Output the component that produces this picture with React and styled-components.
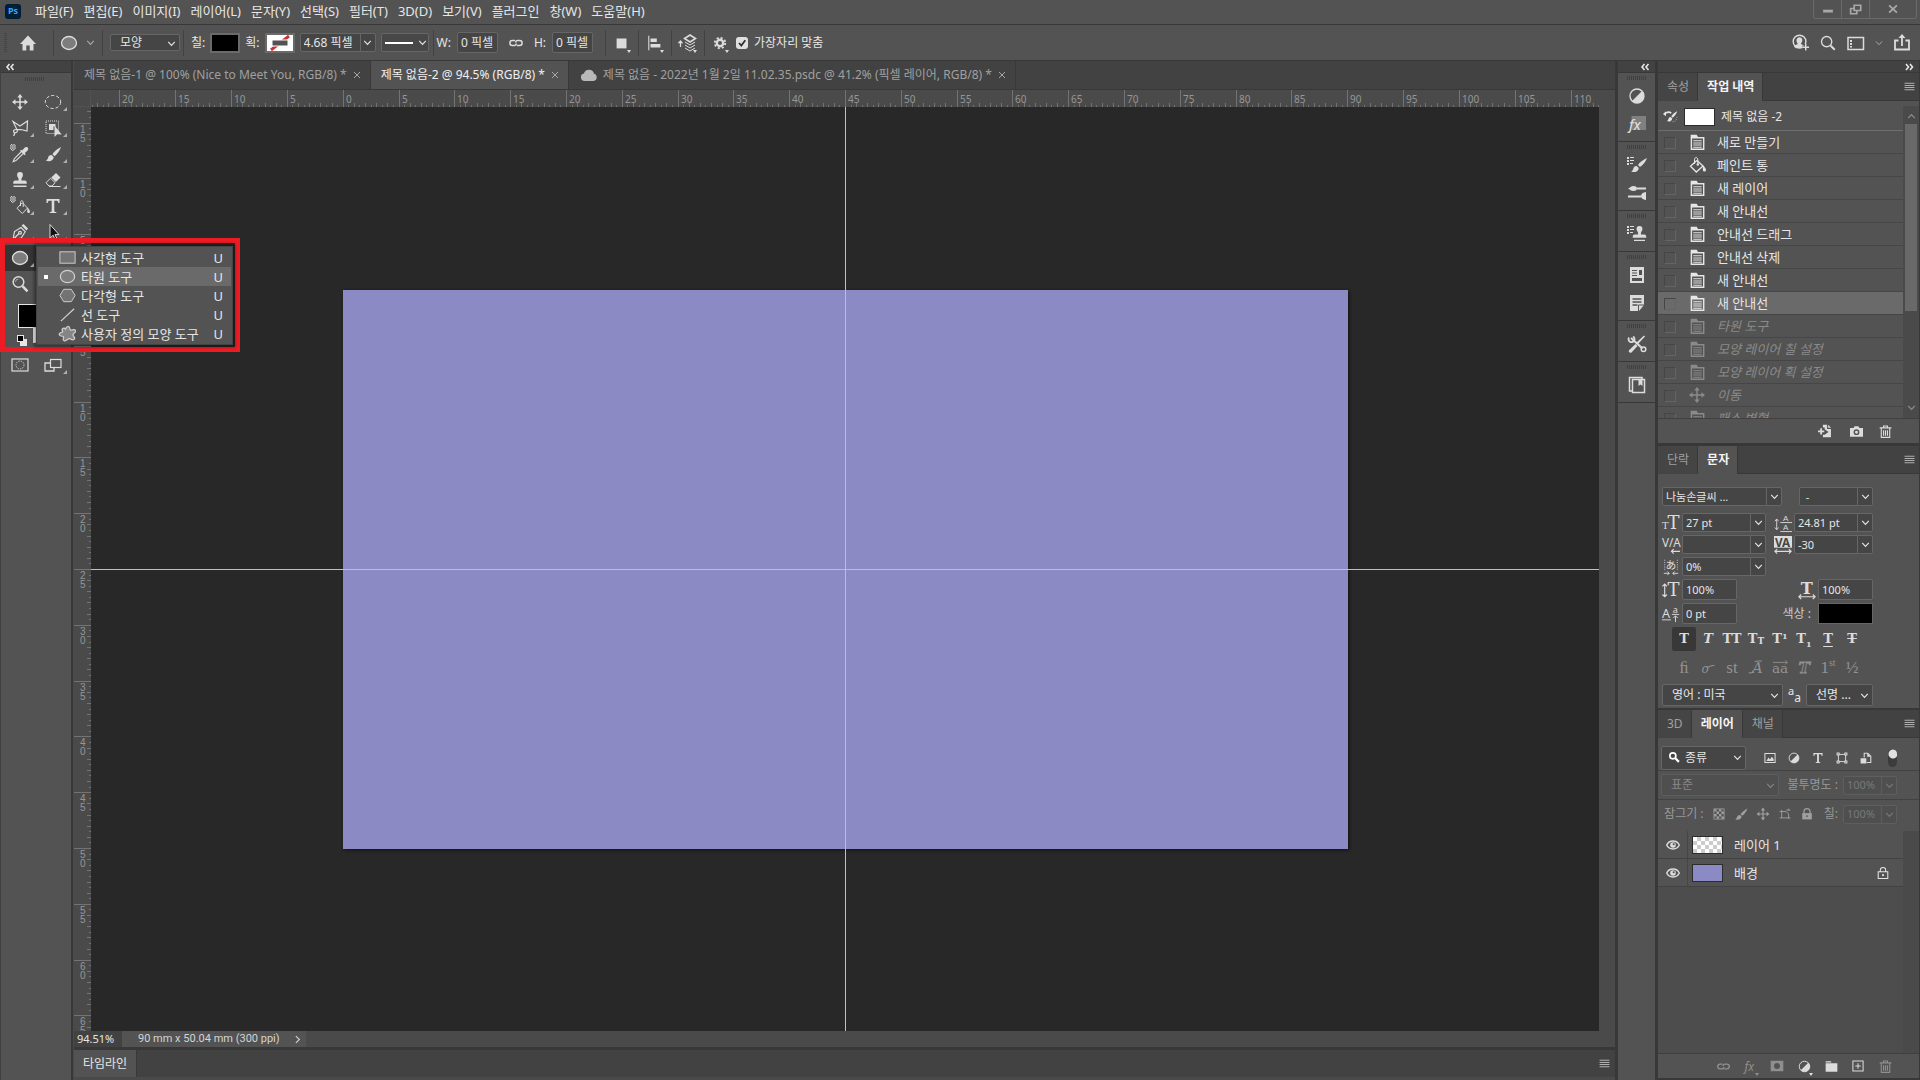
import styled, { createGlobalStyle, css } from 'styled-components';

const GlobalStyle = createGlobalStyle`
    * {
        box-sizing: border-box;
    }
    body {
        margin: 0;
        background-color: #535353;
        color: #e6e6e6;
        font-family: "Noto Sans", "Noto Sans CJK KR", sans-serif;
        font-size: 12px;
        line-height: 16px;
    }
    button, input, select {
        font: inherit;
        color: inherit;
        margin: 0;
        padding: 0;
        border: none;
        border-radius: 0;
        background: none;
        outline: none;
    }
    svg {
        display: block;
        flex-shrink: 0;
    }
`;

/* ---------- icons, all on a 20 x 20 grid ---------- */

const solid = { fill: 'currentColor', stroke: 'none' };
const serif = { ...solid, fontFamily: 'DejaVu Serif, serif' };

const checker = (
    <path
        {...solid}
        d="M1 0h1.200v1.200H1zM3.400 0h1.200v1.200H3.400zM0 1.200h1v1.200H0zM2.200 1.200h1.200v1.200H2.200zM4.600 1.200h1.200v1.200H4.600zM1 2.400h1.200v1.200H1zM3.400 2.400h1.200v1.200H3.400zM0 3.600h1v1.200H0zM2.200 3.600h1.200v1.200H2.200zM4.600 3.600h1.200v1.200H4.600zM1 4.800h1.200V6H1zM3.400 4.800h1.200V6H3.400zM2.200 6h1.200v1H2.200z"
    />
);

const shapes = {
    home: <path {...solid} d="M10 2.500 18 11h-2.500v6.500h-3.800v-5H8.300v5H4.500V11H2z" />,
    move: (
        <g>
            <path d="M10 4v12M4 10h12" strokeWidth="1.500" />
            <path {...solid} d="M10 2l2.700 3.500H7.300zM10 18l2.700-3.500H7.300zM2 10l3.500-2.700v5.400zM18 10l-3.500-2.700v5.400z" />
        </g>
    ),
    marquee: <ellipse cx="10" cy="10" rx="7.700" ry="6.500" strokeDasharray="3.200 2" />,
    ellipse: <ellipse cx="10" cy="10" rx="7.500" ry="6.500" strokeWidth="1.300" fill="#7d7d7d" />,
    lasso: (
        <g strokeWidth="1.200">
            <path d="M3 3.500 10 8l7.500-5-.5 10-6-1.500-4 .2z" />
            <path d="M7 11.700c-2.500-.8-4.500 1.300-3 2.600s4.500-.8 3-2.600zM4.500 14.500c.3 1.500-.2 2.500-1 3.300" />
        </g>
    ),
    objectSelect: (
        <g>
            <rect x="3" y="3" width="12.500" height="12.500" strokeDasharray="1 1" />
            <path {...solid} d="M6 6h6.500v3l-2-.8V12H6z" />
            <path {...solid} d="M11.500 7.500v11.500l2.700-2.800 4.500.2z" />
        </g>
    ),
    dropper: (
        <g>
            {checker}
            <path d="M11.500 7.500 4.700 14.300c-.8.900-.8 2-1.400 3.200 1.200-.5 2.300-.4 3.200-1.300l6.900-6.800" strokeWidth="1.200" />
            <path {...solid} d="M10 6.800l1.200-1.100 1 .8 2.300-2.700c2.200-2.200 5.200.6 2.900 2.900L14.800 9l.9 1.100-1.200 1.200z" />
        </g>
    ),
    brush: (
        <path
            {...solid}
            d="M18 3c-3.500 1.700-7 4.800-8.600 7.200l2.200 2C14 10.300 16.800 6.700 18 3zM8.600 11.100c-2.300 0-3.200 1.300-3.600 2.900-.3 1.200-1 2-2.200 2.500 2.800 1.400 7.300.9 8-3.300z"
        />
    ),
    stamp: (
        <path
            {...solid}
            d="M10 2a3 3 0 0 1 2.900 3.200c0 1.700-1.500 2.500-1.500 4.200v1.200h3.400c1.500 0 2 1 2 3.200H3.200c0-2.200.5-3.200 2-3.200h3.400V9.400c0-1.700-1.500-2.500-1.500-4.200A3 3 0 0 1 10 2zM3.500 15.500h13V17h-13z"
        />
    ),
    eraser: (
        <g>
            <path d="M3 12.800 7.500 8.200l4.600 4.500-3 3.300H6z" />
            <path {...solid} d="M8.300 7.400 13 3l4.500 4.600-4.600 4.300z" />
            <path d="M6 16.500h11.500" />
        </g>
    ),
    bucket: (
        <g>
            <path d="M10 5.500 16 11l-6.700 6L3.500 11.300 9.800 5.500" strokeWidth="1.300" />
            <path d="M7.500 9V4.800C7.500 1.700 10.800 1.700 10.800 5v4" />
            <circle {...solid} cx="10.800" cy="9.500" r="1.200" />
            <path {...solid} d="M16 10.500c1.600 1.300 3 3.300 3 4.500a1.600 1.600 0 0 1-3.200 0z" />
        </g>
    ),
    bucketTool: (
        <g>
            {checker}
            <g transform="translate(3 2)">
                <path d="M9.500 4.800 14.500 10 9.300 15.500 4 10.300 9 4.800M7.500 8V4.500C7.500 2 10.200 2 10.200 4.800V9" />
                <path {...solid} d="M14.500 9.500c1.300 1.300 2.500 3 2.500 4.200a1.400 1.400 0 0 1-2.800 0z" />
            </g>
        </g>
    ),
    type: <path {...solid} d="M3.500 3h13v4h-1.200c-.2-1.700-.7-2.300-2-2.300h-2V15c0 .8.700 1 2 1.100v.9H6.700v-.9c1.300-.1 2-.3 2-1.100V4.700h-2c-1.300 0-1.800.6-2 2.300H3.500z" />,
    pen: (
        <g strokeWidth="1.200">
            <path d="M3 17.500 4.500 9.500 11 5.500l4.200 4.200-4 6.300z" />
            <path {...solid} d="M11.500 3.500l2-1.500 4.500 4.500-1.500 2z" />
            <path d="M3.500 17 9 11.500" />
            <circle cx="10" cy="10.700" r="1.400" />
        </g>
    ),
    pointer: <path d="M7 2.500v13.500l3.200-2.800 1.800 4.600 2-1-2-4.200h4z" fill="#111" />,
    zoom: (
        <g>
            <circle cx="8.500" cy="8" r="5.300" strokeWidth="1.500" />
            <path d="M12.500 12.200 17.500 17.300" strokeWidth="2.500" />
            <path d="M5.500 8a3 3 0 0 1 3-3" strokeOpacity=".6" />
        </g>
    ),
    quickMask: (
        <g>
            <rect x="2" y="4" width="16" height="12" strokeWidth="1.200" />
            <circle cx="10" cy="10" r="4" strokeDasharray="1.200 1.200" />
        </g>
    ),
    screens: (
        <g>
            <rect x="7.500" y="4.500" width="10.500" height="8" strokeWidth="1.200" />
            <path d="M7 8H2v8h9v-3" strokeWidth="1.300" />
        </g>
    ),
    rect: <rect x="2" y="4" width="16" height="12" fill="#737373" />,
    polygon: <path d="M6 3.500h8L18 10l-4 6.500H6L2 10z" fill="#737373" />,
    line: <path d="M3 17 17 4" strokeWidth="1.300" />,
    custom: (
        <path
            d="M8 5.500C8.500 2 12 1.500 12.500 5c.2 1.800 1.200 1.700 2.700 1.200 3.500-1 4.500 2 1.500 3.700-1.500.9-1.200 2 0 3.300 2 2.500-.5 4.500-3 2.800-1.700-1.200-2.700-.7-4 .5-2.500 2.500-5 1-4-1.800.5-1.700-.3-2-1.800-2-3.400-.2-3.500-3-.7-3.700C5.500 8.500 5 8 4.500 7 3.500 4.500 6.500 3.500 8 5.500z"
            strokeWidth="1.300"
            fill="#858585"
        />
    ),
    chain: (
        <path
            d="M9 7.200H6a2.800 2.800 0 0 0 0 5.600h2c1.500 0 2.300-1 2.300-2.300M11 12.800h3a2.800 2.800 0 0 0 0-5.600h-2c-1.500 0-2.300 1-2.300 2.300"
            strokeWidth="1.600"
        />
    ),
    block: <path {...solid} d="M4 5h11v11H4z" />,
    align: <path {...solid} d="M2.500 2h1.200v16H2.500zM5 5h7v4H5zM5 11h11v4H5z" />,
    arrange: (
        <g>
            <path d="M2.500 8v6M.5 10.300 2.500 8l2 2.300" strokeWidth="1.300" />
            <path d="m12 2 5.500 3.500L12 9 6.500 5.500z" strokeWidth="1.600" />
            <path d="m7 9 5 3 5-3M7 12l5 3 5-3M7 15l5 3 5-3" />
        </g>
    ),
    gear: (
        <g>
            <circle cx="10" cy="10" r="4.600" strokeWidth="3.400" />
            <circle cx="10" cy="10" r="7.500" strokeWidth="2.600" strokeDasharray="2.945 2.945" />
        </g>
    ),
    user: (
        <g>
            <circle cx="9" cy="9" r="6.700" strokeWidth="1.500" />
            <path {...solid} d="M9 4.500c3.500 0 3.700 4.500 1.500 6.500 0 1.500 3 1 4 3l-2 2H5l-2-2c1-2 4-1.500 4-3C5 9 5.500 4.500 9 4.500z" />
            <path d="M15.500 11.500v7M12 15h7" stroke="#535353" strokeWidth="3.500" />
            <path d="M15.500 11.500v7M12 15h7" strokeWidth="1.500" />
        </g>
    ),
    search: (
        <g>
            <circle cx="8.500" cy="8.500" r="5.700" strokeWidth="1.500" />
            <path d="m13 13 4.500 4.500" strokeWidth="2.200" />
        </g>
    ),
    workspace: (
        <g>
            <rect x="2" y="4.500" width="15.500" height="12" strokeWidth="1.500" />
            <path {...solid} d="M4 7h2v2H4zM4 10h2v2H4zM4 13h2v1.500H4z" />
        </g>
    ),
    share: (
        <g strokeWidth="1.800">
            <path d="M6.500 7.500H3v9h14v-9h-3.500M10 13V3" />
            <path {...solid} d="m10 1 3.500 4h-7z" />
        </g>
    ),
    cloud: <path {...solid} d="M5.500 16a3.800 3.800 0 0 1-.6-7.500A5.200 5.200 0 0 1 15 8.800a3.700 3.700 0 0 1-.3 7.200z" />,
    adjust: (
        <g>
            <circle cx="10" cy="10" r="7" strokeWidth="1.300" />
            <path {...solid} d="M15 5a7 7 0 1 1-10 10z" />
        </g>
    ),
    styles: (
        <g>
            <path fill="#808080" stroke="none" d="M4.500 2H19v14H4.500z" />
            <text {...solid} x="2" y="16" fontSize="14" fontStyle="italic" fontWeight="500" fontFamily="Noto Sans">fx</text>
        </g>
    ),
    fx: <text {...solid} x="3" y="15" fontSize="14" fontStyle="italic" fontFamily="Noto Sans">fx</text>,
    brushPanel: (
        <g>
            <path {...solid} d="M0 2h2v2H0zM3 2h4v1H3zM0 5h2v2H0zM3 5h4v1H3zM0 8h2v2H0zM3 8h3v1H3z" />
            <path {...solid} d="M20 3c-4 1.500-7.500 4.500-9 7l2 2c3-2 6-5.500 7-9zM9.700 11c-2.700 0-3.200 1.500-3.500 3-.3 1.200-1 2-2 2.500 2.800 1.300 7 .7 7.600-3.500z" />
        </g>
    ),
    brushSettings: (
        <g>
            <path {...solid} d="M1 5.500C3 5 4 3 6.500 3S10 4 10 5.500 9 8 6.500 8 3 6.500 1 5.500zM19 9v8c-3-.5-5-1.500-5-4s2-3.500 5-4z" />
            <path d="M10 5.500h9M1 13.500h13" strokeWidth="2.200" />
        </g>
    ),
    clonePanel: (
        <g>
            <path {...solid} d="M0 2h2v2H0zM3 2h4v1H3zM0 5h2v2H0zM3 5h4v1H3zM0 8h2v2H0zM3 8h3v1H3z" />
            <path {...solid} d="M12.500 2a3 3 0 0 1 2.900 3.200c0 1.700-1.500 2.500-1.500 4.200v1.200h3.400c1.500 0 2 1 2 3.200H5.700c0-2.200.5-3.200 2-3.200h3.400V9.400c0-1.700-1.500-2.500-1.500-4.200a3 3 0 0 1 2.900-3.200zM7 15.700h11V17H7z" />
        </g>
    ),
    library: (
        <g>
            <path {...solid} d="M3 2h14v16H3z" />
            <path d="M5 5.500h5M5 8h5M5 10.500h5" stroke="#535353" strokeWidth="1.200" />
            <path d="M5 13h10v3H5zM12 5h3v5h-3z" fill="#535353" stroke="none" />
        </g>
    ),
    notes: (
        <g>
            <path {...solid} d="M3 2h14v10l-5 6H3z" />
            <path d="M5.500 6h9M5.500 9h9M5.500 12h5" stroke="#535353" strokeWidth="1.300" />
            <path d="M11.500 18v-6H18" stroke="#535353" />
        </g>
    ),
    tools: (
        <g>
            <path d="m4 4 11.500 10.500" strokeWidth="2" />
            <path d="M2 3.500a3 3 0 1 0 4-1" strokeWidth="1.800" />
            <circle cx="16.500" cy="15.300" r="2.300" strokeWidth="1.500" />
            <path {...solid} d="M18 2.500 11 10l-1.500-1.500L17 1.500zM8.500 10l2 2L4.500 18.500c-1.500 1-3.500-.8-2.500-2.300z" />
        </g>
    ),
    bookPanel: (
        <g>
            <path d="M5.500 4.500h12v13h-12zM5 16H2.500V2.500H15V4" strokeWidth="1.500" />
            <path {...solid} d="M11.500 4.500h4v6.500l-2-1.500-2 1.500z" />
        </g>
    ),
    historyBrush: (
        <g>
            <path {...solid} d="M19 3c-3.500 1.500-6.500 4.500-8 6.500l2 2c2.500-2 5-5.500 6-8.500zM10.300 10.500c-2 0-2.700 1.300-3 2.700-.3 1.300-1 2.300-2 2.800 2.500 1.300 6.500.5 7-3.500zM0 6.500 4 3v6.500z" />
            <path d="M4 5.500c2-1.500 5-1.500 7 0" strokeWidth="2" />
            <path d="M13 17c3 0 5-2 5.500-6" strokeDasharray="1 1.700" />
        </g>
    ),
    document: (
        <g>
            <path {...solid} d="M2 1h7l2 3H2z" />
            <path d="M2.800 4.500h14.500V18H2.800z" strokeWidth="1.700" />
            <path d="M5 8h10M5 10.500h10M5 13h10M5 15.500h10" strokeWidth="1.200" />
        </g>
    ),
    newDoc: (
        <g>
            <path d="M0 10.500h9M4.500 6v9" strokeWidth="2.600" />
            <path {...solid} d="M7 1h6v6h5.500v12H7v-3.500h2.500L15 11.500 9.500 7.500V5H7zM14.500 1l4 4.500h-4z" />
        </g>
    ),
    camera: (
        <g>
            <path {...solid} d="M0 4.500h5.500L7 2h6l1.500 2.500H20V18H0z" />
            <circle cx="10" cy="11" r="3.400" stroke="#535353" strokeWidth="2.200" />
        </g>
    ),
    trash: <path d="M1 4.500h18M7 4V1.500h6V4M3.500 5v14h13V5M7 8v8.500M10 8v8.500M13 8v8.500" strokeWidth="1.700" />,
    image: (
        <g>
            <rect x="1.500" y="2.500" width="17" height="15" strokeWidth="1.700" />
            <path {...solid} d="m4 15 3.500-6 2.500 3.500L13 8l3 3.500V15z" />
        </g>
    ),
    transform: (
        <g>
            <path d="M4 4h12v12H4z" strokeWidth="1.600" />
            <path {...solid} d="M1 1h5v5H1zM14 1h5v5h-5zM1 14h5v5H1zM14 14h5v5h-5z" />
            <path fill="#535353" stroke="none" d="M2.700 2.700h1.600v1.600H2.700zM15.700 2.700h1.600v1.600h-1.600zM2.700 15.700h1.600v1.600H2.700zM15.700 15.700h1.600v1.600h-1.600z" />
        </g>
    ),
    smart: (
        <g>
            <path d="M7 9V2h6l5 5v10.500h-7" strokeWidth="1.800" />
            <path {...solid} d="M1 10.500h9.500V19H1zM12 1.500l6 6.500h-6z" />
        </g>
    ),
    lockAlpha: (
        <g>
            <rect x="1.500" y="1.500" width="17" height="17" strokeWidth="1.300" />
            <path {...solid} d="M2 2h4v4H2zM10 2h4v4h-4zM6 6h4v4H6zM14 6h4v4h-4zM2 10h4v4H2zM10 10h4v4h-4zM6 14h4v4H6zM14 14h4v4h-4z" />
        </g>
    ),
    crop: (
        <g strokeWidth="1.500">
            <path d="M4.500 3v14M1 6h11l4 4v8M1 16.500h18" />
            <path d="M16 1v3M12 3.500h7" />
        </g>
    ),
    lock: (
        <g>
            <path {...solid} d="M2 8.500h16V19H2z" />
            <path d="M5 9V6a5 5 0 0 1 10 0v3" strokeWidth="2" />
            <circle fill="#535353" stroke="none" cx="10" cy="13.500" r="1.600" />
        </g>
    ),
    lockOutline: (
        <g strokeWidth="1.700">
            <path d="M2 8h16v11H2zM5.500 8V5.500a4.500 4.500 0 0 1 9 0V8" />
            <circle {...solid} cx="10" cy="13.500" r="1.800" />
        </g>
    ),
    eye: (
        <g>
            <path d="M1 10c3.500-7.500 14.500-7.500 18 0-3.500 7.500-14.500 7.500-18 0z" strokeWidth="2" />
            <circle {...solid} cx="10" cy="10" r="4" />
            <circle fill="#535353" stroke="none" cx="11" cy="9" r="1.500" />
        </g>
    ),
    mask: (
        <g>
            <path {...solid} d="M1 2.500h18v15H1z" />
            <circle fill="#535353" stroke="none" cx="10" cy="10" r="4.300" />
        </g>
    ),
    folder: <path {...solid} d="M1 2h8l1 2H1zM1 5h18v13H1z" />,
    plusBox: <path d="M1.500 1.500h17v17h-17zM10 5.500v9M5.500 10h9" strokeWidth="1.700" />,
    minimize: <path {...solid} d="M3 11h14v4H3z" />,
    restore: <path d="M8 3.500h10v8H8zM12 11.500v5H2.500v-8H8" strokeWidth="2.600" />,
    close: <path d="m3.500 4 13 12M16.500 4l-13 12" strokeWidth="3" />,
    chevron: <path d="m4 7 6 6.500L16 7" strokeWidth="2" />,
    chevronUp: <path d="m4 13 6-6.500 6 6.500" strokeWidth="2" />,
    collapse: <path d="m9 4-5 6 5 6M17 4l-5 6 5 6" strokeWidth="3.200" />,
    expand: <path d="m4 4 5 6-5 6M12 4l5 6-5 6" strokeWidth="3.200" />,
    menu: <path d="M1 4h18M1 8h18M1 12h18M1 16h18" strokeWidth="1.900" />,
    times: <path d="m4 4 12 12M16 4 4 16" strokeWidth="1.700" />,
    fontSize: (
        <g {...serif}>
            <text x="0" y="17" fontSize="11">T</text>
            <text x="6" y="17" fontSize="20">T</text>
        </g>
    ),
    leading: (
        <g>
            <g {...solid} fontFamily="Liberation Sans" fontSize="9">
                <text x="10" y="8">A</text>
                <text x="10" y="18">A</text>
            </g>
            <path d="M7 9.500h13M7 19.500h13M3 6v11M1 8l2-2.500L5 8M1 15l2 2.500L5 15" />
        </g>
    ),
    kerning: (
        <g>
            <text {...solid} x="0" y="12" fontFamily="Noto Sans" fontSize="13">V/A</text>
            <path d="M10 17h10M13 14.500 10.500 17l2.500 2.500" strokeWidth="1.300" />
        </g>
    ),
    tracking: (
        <g>
            <path {...solid} d="M0 0h20v13H0z" />
            <text x="1" y="12" fill="#444" stroke="none" fontFamily="Noto Sans" fontWeight="bold" fontSize="13">VA</text>
            <path d="M1 17h18M3.500 14.500 1 17l2.500 2.500M16.500 14.500 19 17l-2.500 2.500" strokeWidth="1.300" />
        </g>
    ),
    tsume: (
        <g>
            <text {...solid} x="4" y="12" fontFamily="Noto Sans CJK JP" fontSize="12">あ</text>
            <path d="M3 2v12M17 2v12" strokeDasharray="1 1.500" />
            <path d="M2 17h6M12 17h6M6 15l2 2-2 2M14 15l-2 2 2 2" />
        </g>
    ),
    vScale: (
        <g>
            <text {...serif} x="6" y="17" fontSize="20">T</text>
            <path d="M3 4v13M.5 6 3 3.500 5.500 6M.5 15 3 17.500 5.500 15" strokeWidth="1.300" />
        </g>
    ),
    hScale: (
        <g>
            <text {...serif} x="3" y="14" fontWeight="bold" fontSize="18">T</text>
            <path d="M1 17.500h18M3.500 15 1 17.500 3.500 20M16.500 15l2.500 2.500-2.500 2.500" strokeWidth="1.300" />
        </g>
    ),
    baseline: (
        <g>
            <g {...solid} fontFamily="Noto Sans">
                <text x="0" y="14" fontSize="14">A</text>
                <text x="12" y="9" fontSize="10">a</text>
            </g>
            <path d="M0 16.500h10M15 12v7M12.500 14.500 15 12l2.500 2.500M11 10.500h8" />
        </g>
    ),
    swash: (
        <g>
            <text {...serif} x="2" y="16" fontSize="15" fontStyle="italic">o</text>
            <path d="M8 8.500c3 2 5-3 10-1.500" strokeWidth="1.300" />
        </g>
    ),
    titling: (
        <g>
            <text {...serif} x="5" y="16" fontSize="17" fontStyle="italic">A</text>
            <path d="M6 14c-1 2-3 3-5 2M8 3.500c2-2 5-1 8-1" strokeWidth="1.300" />
        </g>
    ),
    contextual: (
        <g>
            <text {...serif} x="0" y="17" fontSize="16">aa</text>
            <path d="M1 4h17M15.500 1.500 18 4l-2.500 2.500" />
        </g>
    ),
    stylistic: <text x="3" y="17" fontFamily="DejaVu Serif" fontSize="18" fontStyle="italic" fontWeight="bold" strokeWidth="1">T</text>,
};

const Icon = ({ name, size = 20, color }) => (
    <svg width={size} height={size} viewBox="0 0 20 20" overflow="visible" fill="none" stroke="currentColor" strokeWidth="1" color={color} aria-hidden="true">
        {shapes[name]}
    </svg>
);

/* ---------- shared controls ---------- */

const IconButton = styled.button`
    position: relative;
    display: flex;
    align-items: center;
    justify-content: center;
    width: ${p => p.$w || 20}px;
    height: ${p => p.$h || 20}px;
    flex-shrink: 0;
    color: ${p => (p.$dim ? '#8f8f8f' : '#dcdcdc')};
    cursor: pointer;

    ${p => p.$flyout && css`
        &::after {
            content: "";
            position: absolute;
            right: 2px;
            bottom: 4px;
            border-left: 4px solid transparent;
            border-bottom: 4px solid #b0b0b0;
        }
    `}
    ${p => p.$more && css`
        &::after {
            content: "";
            position: absolute;
            right: 1px;
            bottom: 0;
            border: 2px solid transparent;
            border-top: 3px solid currentColor;
            border-bottom: none;
        }
    `}
`;

const FieldBox = styled.span`
    display: inline-flex;
    flex-shrink: 0;
    width: ${p => p.$w}px;
    height: ${p => p.$h || 19}px;
    border: 1px solid ${p => (p.$dim ? '#5e5e5e' : '#666666')};
    border-radius: 2px;
    background-color: ${p => (p.$dim ? '#4f4f4f' : '#454545')};
    color: ${p => (p.$dim ? '#787878' : '#e6e6e6')};
    font-size: ${p => p.$size || 11}px;

    input {
        flex: 1;
        min-width: 0;
        padding: 0 3px;
    }
    button {
        display: flex;
        align-items: center;
        justify-content: center;
        width: 15px;
        border-left: 1px solid ${p => (p.$dim ? '#5e5e5e' : '#666666')};
    }
`;

const Field = ({ label, value, combo, ...box }) => (
    <FieldBox {...box}>
        <input type="text" aria-label={label} defaultValue={value} />
        {combo && <button aria-label={`${label} 목록`}><Icon name="chevron" size={11} /></button>}
    </FieldBox>
);

const SelectBox = styled.span`
    display: inline-grid;
    align-items: center;
    flex-shrink: 0;
    width: ${p => p.$w}px;
    height: ${p => p.$h || 22}px;
    border: 1px solid ${p => (p.$dim ? '#5e5e5e' : '#666666')};
    border-radius: 2px;
    background-color: ${p => (p.$dim ? '#4f4f4f' : '#454545')};
    color: ${p => (p.$dim ? '#878787' : '#e6e6e6')};
    font-size: 12px;

    > * {
        grid-area: 1 / 1;
    }
    select {
        width: 100%;
        height: 100%;
        padding-left: ${p => p.$pad || 9}px;
        appearance: none;
    }
    > svg {
        justify-self: end;
        margin-right: 2px;
        pointer-events: none;
    }
    > svg.lead {
        justify-self: start;
        margin-left: 7px;
    }
`;

const Select = ({ label, value, lead, ...box }) => (
    <SelectBox {...box}>
        <select aria-label={label}><option>{value}</option></select>
        {lead && <svg className="lead" width="11" height="11" viewBox="0 0 20 20" fill="none" stroke="#fff" strokeWidth="3"><circle cx="7" cy="7" r="5.500" /><path d="m11 11 7 7" strokeWidth="4" /></svg>}
        <Icon name="chevron" size={11} />
    </SelectBox>
);

/* ---------- top bars ---------- */

const Page = styled.div`
    display: flex;
    flex-direction: column;
    height: 100vh;
    overflow: hidden;
`;
const MenuBar = styled.nav`
    display: flex;
    align-items: center;
    height: 25px;
    flex-shrink: 0;
    padding: 0 0 2px 5px;
    border-bottom: 1px solid #383838;
`;
const Logo = styled.span`
    width: 16px;
    height: 15px;
    margin-right: 14px;
    border-radius: 3px;
    background-color: #001e36;
    color: #31a8ff;
    font-size: 9px;
    font-weight: 700;
    line-height: 14px;
    text-align: center;
`;
const MenuItems = styled.div`
    display: flex;
    gap: 10px;
    flex: 1;
    font-size: 13px;
    button {
        white-space: nowrap;
    }
`;
const WindowButtons = styled.div`
    display: flex;
    align-self: flex-start;
    height: 19px;
    margin-right: 3px;
    border: 1px solid #6a6a6a;
    border-top: none;
    border-radius: 0 0 3px 3px;
    button + button {
        border-left: 1px solid #6a6a6a;
    }
`;
const OptionsBar = styled.div`
    display: flex;
    align-items: center;
    height: 36px;
    flex-shrink: 0;
    padding: 0 8px 0 4px;
    border-bottom: 1px solid #383838;
`;
const OptionGroup = styled.div`
    display: flex;
    align-items: center;
    gap: ${p => p.$gap || 0}px;
    height: 26px;
    padding: 0 ${p => p.$end || 0}px 0 ${p => p.$start || 0}px;
    border-right: ${p => (p.$last ? 'none' : '1px solid #424242')};
`;
const SideGrip = styled.span`
    width: 3px;
    height: 20px;
    background: repeating-linear-gradient(#444444 0 1px, transparent 1px 2px);
`;
const Swatch = styled.button`
    width: 30px;
    height: 20px;
    border: 2px solid #6a6a6a;
    background-color: ${p => p.$color};
    svg {
        width: 100%;
        height: 100%;
    }
`;
const StrokeLine = styled.button`
    display: flex;
    align-items: center;
    gap: 4px;
    width: 48px;
    height: 19px;
    padding-left: 3px;
    border: 1px solid #666666;
    border-radius: 2px;
    background-color: #484848;
    &::before {
        content: "";
        width: 29px;
        height: 2px;
        background-color: #ffffff;
    }
`;
const SnapLabel = styled.label`
    display: flex;
    align-items: center;
    gap: 6px;
    font-size: 12px;
    input {
        width: 12px;
        height: 12px;
        appearance: none;
        border-radius: 3px;
        background-color: #e0e0e0;
    }
    input:checked {
        background-image: url("data:image/svg+xml,%3Csvg xmlns='http://www.w3.org/2000/svg' viewBox='0 0 12 12'%3E%3Cpath d='M3 6l2.300 2.500L9.300 3.300' fill='none' stroke='%23303030' stroke-width='1.800'/%3E%3C/svg%3E");
    }
`;
const Spacer = styled.span`
    flex: 1;
`;

const menus = ['파일(F)', '편집(E)', '이미지(I)', '레이어(L)', '문자(Y)', '선택(S)', '필터(T)', '3D(D)', '보기(V)', '플러그인', '창(W)', '도움말(H)'];

const TopBars = () => (
    <>
        <MenuBar>
            <Logo>Ps</Logo>
            <MenuItems>{menus.map(m => <button key={m}>{m}</button>)}</MenuItems>
            <WindowButtons>
                <IconButton $w={27} $h={18} aria-label="최소화"><Icon name="minimize" size={14} color="#a8a8a8" /></IconButton>
                <IconButton $w={28} $h={18} aria-label="복원"><Icon name="restore" size={13} color="#a8a8a8" /></IconButton>
                <IconButton $w={47} $h={18} aria-label="닫기"><Icon name="close" size={12} color="#a8a8a8" /></IconButton>
            </WindowButtons>
        </MenuBar>
        <OptionsBar>
            <SideGrip />
            <OptionGroup $start={11} $end={15}>
                <IconButton aria-label="홈"><Icon name="home" /></IconButton>
            </OptionGroup>
            <OptionGroup $start={5} $end={6} $gap={5}>
                <IconButton aria-label="타원 도구"><Icon name="ellipse" /></IconButton>
                <IconButton $w={12} aria-label="도구 사전 설정"><Icon name="chevron" size={11} color="#a8a8a8" /></IconButton>
            </OptionGroup>
            <OptionGroup $start={7} $end={3}>
                <Select label="도구 모드" value="모양" $w={70} $h={17} />
            </OptionGroup>
            <OptionGroup $start={7} $end={4} $gap={5}>
                <span>칠:</span>
                <Swatch $color="#000000" aria-label="칠" />
                <span>획:</span>
                <Swatch $color="#ffffff" aria-label="획">
                    <svg viewBox="0 0 26 16"><path d="M4 15 22 1" stroke="#d03030" strokeWidth="3" /><path d="M5 5h16v6H5z" fill="#535353" stroke="#ffffff" /></svg>
                </Swatch>
                <Field label="획 폭" value="4.68 픽셀" combo $w={76} $size={12} />
                <StrokeLine aria-label="획 유형"><Icon name="chevron" size={11} /></StrokeLine>
            </OptionGroup>
            <OptionGroup $start={3} $end={12} $gap={6}>
                <span>W:</span>
                <Field label="폭" value="0 픽셀" $w={41} $h={21} $size={12} />
                <IconButton $w={24} aria-label="연결"><Icon name="chain" size={18} /></IconButton>
                <span>H:</span>
                <Field label="높이" value="0 픽셀" $w={41} $h={21} $size={12} />
            </OptionGroup>
            <OptionGroup $start={6} $end={6}>
                <IconButton $more aria-label="패스 작업"><Icon name="block" size={18} /></IconButton>
            </OptionGroup>
            <OptionGroup $start={6} $end={6}>
                <IconButton $more aria-label="패스 정렬"><Icon name="align" size={18} /></IconButton>
            </OptionGroup>
            <OptionGroup $start={6} $end={6}>
                <IconButton $more aria-label="패스 배열"><Icon name="arrange" size={20} /></IconButton>
            </OptionGroup>
            <OptionGroup $start={5} $gap={6} $last>
                <IconButton $more aria-label="설정"><Icon name="gear" size={14} /></IconButton>
                <SnapLabel><input type="checkbox" defaultChecked />가장자리 맞춤</SnapLabel>
            </OptionGroup>
            <Spacer />
            <OptionGroup $gap={8} $last>
                <IconButton aria-label="공유 대상"><Icon name="user" size={19} /></IconButton>
                <IconButton aria-label="검색"><Icon name="search" size={18} /></IconButton>
                <IconButton aria-label="작업 영역"><Icon name="workspace" size={20} /></IconButton>
                <IconButton $w={10} aria-label="작업 영역 목록"><Icon name="chevron" size={10} color="#a8a8a8" /></IconButton>
                <IconButton aria-label="공유"><Icon name="share" size={20} /></IconButton>
            </OptionGroup>
        </OptionsBar>
    </>
);

/* ---------- tool panel ---------- */

const Body = styled.div`
    display: flex;
    flex: 1;
    min-height: 0;
`;
const ToolPanel = styled.aside`
    width: 73px;
    flex-shrink: 0;
    border-left: 1px solid #404040;
    border-right: 2px solid #383838;
`;
const Strip = styled.div`
    display: flex;
    align-items: center;
    justify-content: ${p => p.$align || 'flex-start'};
    height: 12px;
    padding: 0 5px 0 4px;
    border-bottom: 1px solid #383838;
    background-color: #424242;
`;
const Grip = styled.div`
    width: 20px;
    height: 4px;
    margin: ${p => p.$m || '3px auto 2px'};
    background: repeating-linear-gradient(90deg, #404040 0 1px, transparent 1px 2px);
`;
const ToolGrid = styled.div`
    display: grid;
    grid-template-columns: 33px 33px;
    grid-auto-rows: 26px;
    padding-left: 2px;
`;
const ToolCell = styled.div`
    position: relative;
    grid-column: ${p => p.$col || 'auto'};
    ${p => p.$active && css`
        > button {
            background-color: #353535;
        }
    `}
`;
const Callout = styled.div`
    position: absolute;
    left: -3px;
    top: -7px;
    z-index: 5;
    width: 240px;
    height: 114px;
    padding: 3px 2px 2px 31px;
    border: 5px solid #ed1c24;
`;
const Flyout = styled.ul`
    margin: 0;
    padding: 1px;
    list-style: none;
    border: 1px solid #444444;
    background-color: #535353;
    box-shadow: 0 0 3px 2px rgba(0, 0, 0, 0.4);
`;
const FlyoutItem = styled.button`
    display: flex;
    align-items: center;
    width: 100%;
    height: 19px;
    padding: 0 8px 0 6px;
    background-color: ${p => (p.$on ? '#6a6a6a' : 'transparent')};
    font-size: 13px;
    white-space: nowrap;

    &::before {
        content: "";
        width: 4px;
        height: 4px;
        margin-right: 10px;
        background-color: ${p => (p.$on ? '#ffffff' : 'transparent')};
    }
    span {
        flex: 1;
        margin-left: 4px;
        text-align: left;
    }
`;
const Swatches = styled.div`
    position: relative;
    height: 55px;
`;
const ColorChip = styled.button`
    position: absolute;
    left: ${p => p.$x}px;
    top: ${p => p.$y}px;
    width: ${p => p.$s}px;
    height: ${p => p.$s}px;
    border: 1px solid #e6e6e6;
    background-color: ${p => p.$color};
`;

const flyoutTools = [
    ['rect', '사각형 도구'],
    ['ellipse', '타원 도구'],
    ['polygon', '다각형 도구'],
    ['line', '선 도구'],
    ['custom', '사용자 정의 모양 도구'],
];
const tools = [
    ['move', '이동'], ['marquee', '선택 윤곽'],
    ['lasso', '올가미'], ['objectSelect', '개체 선택'],
    ['dropper', '스포이드'], ['brush', '브러시'],
    ['stamp', '도장'], ['eraser', '지우개'],
    ['bucketTool', '페인트 통'], ['type', '문자'],
    ['pen', '펜'], ['pointer', '패스 선택'],
];

const Tools = () => (
    <ToolPanel>
        <Strip><Icon name="collapse" size={10} /></Strip>
        <Grip $m="4px auto 8px 24px" />
        <ToolGrid>
            {tools.map(([name, label]) => (
                <ToolCell key={name}>
                    <IconButton $w={33} $h={26} $flyout={name !== 'move'} aria-label={label}>
                        <Icon name={name} size={20} />
                    </IconButton>
                </ToolCell>
            ))}
            <ToolCell $active>
                <IconButton $w={33} $h={26} $flyout aria-label="타원"><Icon name="ellipse" /></IconButton>
                <Callout>
                    <Flyout>
                        {flyoutTools.map(([name, label]) => (
                            <li key={name}>
                                <FlyoutItem $on={name === 'ellipse'}>
                                    <Icon name={name} size={19} color="#d0d0d0" />
                                    <span>{label}</span>U
                                </FlyoutItem>
                            </li>
                        ))}
                    </Flyout>
                </Callout>
            </ToolCell>
            <ToolCell $col={1}>
                <IconButton $w={33} $h={26} aria-label="돋보기"><Icon name="zoom" /></IconButton>
            </ToolCell>
        </ToolGrid>
        <Swatches>
            <ColorChip $x={32} $y={22} $s={24} $color="#ffffff" aria-label="배경색" />
            <ColorChip $x={17} $y={7} $s={24} $color="#000000" aria-label="전경색" />
            <ColorChip $x={19} $y={42} $s={7} $color="#e6e6e6" aria-label="색상 교체" />
            <ColorChip $x={16} $y={38} $s={7} $color="#000000" aria-label="기본 색상" />
        </Swatches>
        <ToolGrid>
            <IconButton $w={33} $h={26} aria-label="빠른 마스크"><Icon name="quickMask" /></IconButton>
            <IconButton $w={33} $h={26} $flyout aria-label="화면 모드"><Icon name="screens" /></IconButton>
        </ToolGrid>
    </ToolPanel>
);

/* ---------- document ---------- */

const DocumentArea = styled.main`
    display: flex;
    flex-direction: column;
    flex: 1;
    min-width: 0;
    border-left: 1px solid #4a4a4a;
`;
const DocTabs = styled.div`
    display: flex;
    height: 29px;
    border-bottom: 1px solid #383838;
    background-color: #424242;
`;
const DocTab = styled.div`
    display: flex;
    align-items: center;
    gap: 4px;
    padding: 0 7px 0 10px;
    border-right: 1px solid #383838;
    background-color: ${p => (p.$on ? '#535353' : '#424242')};
    color: ${p => (p.$on ? '#f0f0f0' : '#a0a0a0')};
    font-size: 12px;
    white-space: nowrap;
`;
const Stage = styled.div`
    display: grid;
    grid-template-columns: 17px 1fr 16px;
    grid-template-rows: 17px 1fr;
    flex: 1;
    min-height: 0;
    background-color: #4a4a4a;
`;
const RulerCorner = styled.div`
    border-right: 1px dotted #5a5a5a;
    border-bottom: 1px dotted #5a5a5a;
`;
const RulerSvg = styled.svg`
    width: 100%;
    height: 100%;
    overflow: hidden;
    text {
        fill: #969696;
        font-size: 10px;
    }
    path {
        stroke: #737373;
    }
`;
const Canvas = styled.div`
    position: relative;
    display: flex;
    align-items: center;
    justify-content: center;
    min-height: 0;
    background-color: #282828;
`;
const Artboard = styled.div`
    width: 1005px;
    height: 559px;
    background-color: #8b8ac5;
    box-shadow: 1px 1px 3px #111111;
`;
const GuideV = styled.i`
    position: absolute;
    top: 0;
    bottom: 0;
    left: 50%;
    width: 1px;
    background-color: #4ef0f0;
`;
const GuideH = styled.i`
    position: absolute;
    left: 0;
    right: 0;
    top: 50%;
    height: 1px;
    background-color: #4ef0f0;
`;
const ScrollTrack = styled.div`
    background-color: #4a4a4a;
`;
const StatusBar = styled.div`
    display: flex;
    height: 16px;
    background-color: #4a4a4a;
    font-size: 11px;
`;
const ZoomInput = styled.input`
    width: 48px;
    padding-left: 3px;
    background-color: #424242;
`;
const DocInfo = styled.button`
    display: flex;
    align-items: center;
    justify-content: space-between;
    width: 184px;
    padding: 0 3px 0 16px;
    background-color: #535353;
    color: #d4d4d4;
    font-family: Roboto, sans-serif;
    svg {
        transform: rotate(-90deg);
    }
`;
const Timeline = styled.div`
    display: flex;
    align-items: center;
    height: 33px;
    padding-right: 5px;
    border-top: 3px solid #383838;
    border-bottom: 3px solid #4a4a4a;
    background-color: #424242;
`;
const TimelineTab = styled.button`
    align-self: stretch;
    padding: 0 9px;
    border-right: 1px solid #383838;
    background-color: #535353;
`;

// 300 ppi at 94.51 %
const PX_PER_MM = 11.162;

const marks = (from, to, centre) => {
    const list = [];
    for (let half = from * 2; half <= to * 2; half++) {
        list.push({
            at: Math.round((half / 2 - centre) * PX_PER_MM),
            major: half % 10 === 0,
            label: Math.abs(half / 2),
            tick: half % 2 === 0 ? 4 : 2,
        });
    }
    return list;
};

const TopRuler = () => (
    <RulerSvg>
        <svg x="50%" overflow="visible">
            {marks(-24, 114, 45).map(m => (
                <g key={m.at}>
                    <path d={`M${m.at + 0.5} ${m.major ? 0 : 17 - m.tick}V17`} />
                    {m.major && <text x={m.at + 3} y="13">{m.label}</text>}
                </g>
            ))}
        </svg>
    </RulerSvg>
);
const LeftRuler = () => (
    <RulerSvg>
        <svg y="50%" overflow="visible">
            {marks(-18, 68, 25).map(m => (
                <g key={m.at}>
                    <path d={`M${m.major ? 0 : 17 - m.tick} ${m.at + 0.5}H17`} />
                    {m.major && String(m.label).split('').map((digit, i) => (
                        <text key={i} x="6" y={m.at + 10 + i * 9} fontFamily="Liberation Sans">{digit}</text>
                    ))}
                </g>
            ))}
        </svg>
    </RulerSvg>
);

const TabClose = () => (
    <IconButton $w={12} aria-label="탭 닫기"><Icon name="times" size={10} color="#b8b8b8" /></IconButton>
);

const Document = () => (
    <DocumentArea>
        <DocTabs>
            <DocTab>제목 없음-1 @ 100% (Nice to Meet You, RGB/8) *<TabClose /></DocTab>
            <DocTab $on>제목 없음-2 @ 94.5% (RGB/8) *<TabClose /></DocTab>
            <DocTab><Icon name="cloud" size={20} color="#b8b8b8" />제목 없음 - 2022년 1월 2일 11.02.35.psdc @ 41.2% (픽셀 레이어, RGB/8) *<TabClose /></DocTab>
        </DocTabs>
        <Stage>
            <RulerCorner />
            <TopRuler />
            <ScrollTrack />
            <LeftRuler />
            <Canvas>
                <Artboard />
                <GuideV />
                <GuideH />
            </Canvas>
            <ScrollTrack />
        </Stage>
        <StatusBar>
            <ZoomInput aria-label="확대 비율" defaultValue="94.51%" />
            <DocInfo>90 mm x 50.04 mm (300 ppi)<Icon name="chevron" size={11} /></DocInfo>
        </StatusBar>
        <Timeline>
            <TimelineTab>타임라인</TimelineTab>
            <Spacer />
            <IconButton $w={12} aria-label="타임라인 메뉴"><Icon name="menu" size={11} color="#b0b0b0" /></IconButton>
        </Timeline>
    </DocumentArea>
);

/* ---------- collapsed dock ---------- */

const Dock = styled.aside`
    width: 43px;
    flex-shrink: 0;
    border: solid #383838;
    border-width: 0 3px;
`;
const DockGroup = styled.div`
    display: flex;
    flex-direction: column;
    align-items: center;
    padding-bottom: 3px;
    border-bottom: 1px solid #383838;
`;

const dockGroups = [
    ['adjust', 'styles'],
    ['brushPanel', 'brushSettings'],
    ['clonePanel'],
    ['library', 'notes'],
    ['tools'],
    ['bookPanel'],
];

const IconDock = () => (
    <Dock>
        <Strip $align="flex-end"><Icon name="collapse" size={10} /></Strip>
        {dockGroups.map(group => (
            <DockGroup key={group[0]}>
                <Grip />
                {group.map(name => (
                    <IconButton key={name} $w={37} $h={28} aria-label={name}><Icon name={name} size={20} /></IconButton>
                ))}
            </DockGroup>
        ))}
    </Dock>
);

/* ---------- right panels ---------- */

const Panels = styled.aside`
    display: flex;
    flex-direction: column;
    width: 262px;
    flex-shrink: 0;
    border-right: 1px solid #383838;
`;
const Panel = styled.section`
    display: flex;
    flex-direction: column;
    flex: ${p => (p.$grow ? '1' : 'none')};
    border-bottom: ${p => p.$edge || 2}px solid #383838;
`;
const TabRow = styled.div`
    display: flex;
    align-items: center;
    height: 28px;
    flex-shrink: 0;
    padding-right: 4px;
    border-bottom: 1px solid #383838;
    background-color: #424242;
`;
const Tab = styled.button`
    height: 28px;
    padding: 0 8px 0 9px;
    border-right: 1px solid #383838;
    background-color: ${p => (p.$on ? '#535353' : '#454545')};
    color: ${p => (p.$on ? '#f4f4f4' : '#a0a0a0')};
    font-weight: ${p => (p.$on ? 700 : 400)};
`;

const PanelTabs = ({ tabs, active }) => (
    <TabRow>
        {tabs.map(t => <Tab key={t} $on={t === active}>{t}</Tab>)}
        <Spacer />
        <IconButton $w={12} aria-label="패널 메뉴"><Icon name="menu" size={11} color="#b0b0b0" /></IconButton>
    </TabRow>
);

const HistoryBody = styled.div`
    display: flex;
    height: 317px;
`;
const HistoryList = styled.div`
    flex: 1;
    overflow: hidden;
`;
const Snapshot = styled.div`
    display: flex;
    align-items: center;
    gap: 6px;
    height: 30px;
    padding: 2px 0 0 5px;
    border-bottom: 1px solid #6e6e6e;
`;
const Thumb = styled.span`
    width: 31px;
    height: 18px;
    border: 1px solid #2c2c2c;
    background: ${p => p.$bg || '#ffffff'};
`;
const HistoryRow = styled.div`
    display: flex;
    align-items: center;
    height: 23px;
    padding-left: 6px;
    border-bottom: 1px solid #464646;
    background-color: ${p => (p.$on ? '#6a6a6a' : 'transparent')};
    color: ${p => (p.$undone ? '#8a8a8a' : '#e6e6e6')};
    font-size: 13px;
    font-style: ${p => (p.$undone ? 'italic' : 'normal')};

    input {
        width: 12px;
        height: 12px;
        margin: 2px 11px 0 0;
        appearance: none;
        border: 1px solid #646464;
        border-top-color: #464646;
        border-left-color: #464646;
    }
    label {
        display: grid;
        grid-template-columns: 20px auto;
        align-items: center;
        gap: 10px;
    }
    svg {
        justify-self: center;
    }
`;
const ScrollBar = styled.div`
    display: flex;
    flex-direction: column;
    align-items: center;
    width: 16px;
    margin-top: 5px;
    padding: 5px 0;
    background-color: #4a4a4a;
    color: #8f8f8f;
`;
const ScrollThumb = styled.span`
    width: 12px;
    height: 187px;
    margin: 2px 0 auto;
    background-color: #696969;
`;
const PanelFooter = styled.div`
    display: flex;
    align-items: center;
    justify-content: flex-end;
    gap: ${p => p.$gap}px;
    height: 25px;
    padding-right: ${p => p.$end}px;
    border-top: 1px solid #404040;
    background-color: #535353;
`;

const history = [
    ['document', '새로 만들기'], ['bucket', '페인트 통'], ['document', '새 레이어'], ['document', '새 안내선'],
    ['document', '안내선 드래그'], ['document', '안내선 삭제'], ['document', '새 안내선'], ['document', '새 안내선'],
    ['document', '타원 도구'], ['document', '모양 레이어 칠 설정'], ['document', '모양 레이어 획 설정'], ['move', '이동'],
    ['document', '패스 변형'],
];
const CURRENT_STATE = 7;

const HistoryPanel = () => (
    <Panel $edge={3}>
        <PanelTabs tabs={['속성', '작업 내역']} active="작업 내역" />
        <HistoryBody>
            <HistoryList>
                <Snapshot>
                    <Icon name="historyBrush" size={15} />
                    <Thumb />
                    <span>제목 없음 -2</span>
                </Snapshot>
                {history.map(([icon, text], i) => (
                    <HistoryRow key={i} $on={i === CURRENT_STATE} $undone={i > CURRENT_STATE}>
                        <input type="checkbox" id={`state-${i}`} />
                        <label htmlFor={`state-${i}`}><Icon name={icon} size={icon === 'document' ? 17 : 20} />{text}</label>
                    </HistoryRow>
                ))}
            </HistoryList>
            <ScrollBar>
                <Icon name="chevronUp" size={11} />
                <ScrollThumb />
                <Icon name="chevron" size={11} />
            </ScrollBar>
        </HistoryBody>
        <PanelFooter $gap={11} $end={26}>
            <IconButton aria-label="새 문서"><Icon name="newDoc" size={14} /></IconButton>
            <IconButton aria-label="새 스냅숏"><Icon name="camera" size={13} /></IconButton>
            <IconButton $w={16} aria-label="삭제"><Icon name="trash" size={13} /></IconButton>
        </PanelFooter>
    </Panel>
);

const CharBody = styled.div`
    display: flex;
    flex-direction: column;
    gap: 3px;
    width: 215px;
    padding: 13px 0 2px 4px;
`;
const CharRow = styled.div`
    display: flex;
    align-items: center;
    justify-content: space-between;
    &:first-child {
        margin-bottom: 4px;
    }
`;
const CharCell = styled.div`
    display: flex;
    align-items: center;
    gap: 2px;
    > svg {
        color: #dcdcdc;
    }
`;
const ColorLabel = styled.label`
    display: flex;
    align-items: center;
    gap: 7px;
    color: #cccccc;
`;
const ColorBox = styled.button`
    width: 55px;
    height: 21px;
    border: 1px solid #666666;
    background-color: #000000;
`;
const StyleRow = styled.div`
    display: grid;
    grid-template-columns: repeat(8, 24px);
    padding-left: 10px;
`;
const StyleButton = styled.button`
    display: flex;
    align-items: center;
    justify-content: center;
    height: ${p => (p.$dim ? 27 : 24)}px;
    border-radius: 2px;
    background-color: ${p => (p.$on ? '#383838' : 'transparent')};
    color: ${p => (p.$dim ? '#929292' : '#dcdcdc')};
    font-family: ${p => (p.$dim ? '"Liberation Serif"' : '"DejaVu Serif"')}, serif;
    font-size: ${p => (p.$dim ? 17 : 13)}px;
    font-weight: ${p => (p.$bold ? 700 : 400)};
    font-style: ${p => (p.$italic ? 'italic' : 'normal')};
    text-decoration: ${p => p.$line || 'none'};
    text-underline-offset: 3px;
    line-height: 16px;
    small {
        padding-top: 3px;
        font-size: 9px;
    }
    sup, sub {
        font-size: ${p => (p.$dim ? 10 : 8)}px;
        line-height: 8px;
    }
    sup {
        align-self: flex-start;
        margin-top: 5px;
    }
    sub {
        align-self: flex-end;
        margin-bottom: 3px;
    }
`;
const AntiAlias = styled.span`
    display: flex;
    align-items: flex-end;
    height: 22px;
    font-size: 12px;
    sup {
        align-self: flex-start;
        font-size: 11px;
        line-height: 14px;
    }
`;

const CharacterPanel = () => (
    <Panel>
        <PanelTabs tabs={['단락', '문자']} active="문자" />
        <CharBody>
            <CharRow>
                <Field label="글꼴" value="나눔손글씨 ..." combo $w={120} />
                <Field label="글꼴 스타일" value=" -" combo $w={74} />
            </CharRow>
            <CharRow>
                <CharCell><Icon name="fontSize" size={18} /><Field label="글꼴 크기" value="27 pt" combo $w={84} /></CharCell>
                <CharCell><Icon name="leading" size={18} /><Field label="행간" value="24.81 pt" combo $w={79} /></CharCell>
            </CharRow>
            <CharRow>
                <CharCell><Icon name="kerning" size={18} /><Field label="커닝" value="" combo $w={84} /></CharCell>
                <CharCell><Icon name="tracking" size={18} /><Field label="자간" value="-30" combo $w={79} /></CharCell>
            </CharRow>
            <CharRow>
                <CharCell><Icon name="tsume" size={18} /><Field label="비율 간격" value="0%" combo $w={84} /></CharCell>
            </CharRow>
            <CharRow>
                <CharCell><Icon name="vScale" size={18} /><Field label="세로 비율" value="100%" $w={55} $h={21} /></CharCell>
                <CharCell><Icon name="hScale" size={18} /><Field label="가로 비율" value="100%" $w={55} $h={21} /></CharCell>
            </CharRow>
            <CharRow>
                <CharCell><Icon name="baseline" size={18} /><Field label="기준선 이동" value="0 pt" $w={55} $h={21} /></CharCell>
                <ColorLabel htmlFor="text-color">색상 :<ColorBox id="text-color" aria-label="색상" /></ColorLabel>
            </CharRow>
            <StyleRow>
                <StyleButton $on $bold>T</StyleButton>
                <StyleButton $italic $bold>T</StyleButton>
                <StyleButton $bold>TT</StyleButton>
                <StyleButton $bold>T<small>T</small></StyleButton>
                <StyleButton $bold>T<sup>1</sup></StyleButton>
                <StyleButton $bold>T<sub>1</sub></StyleButton>
                <StyleButton $bold $line="underline">T</StyleButton>
                <StyleButton $bold $line="line-through">T</StyleButton>
            </StyleRow>
            <StyleRow>
                <StyleButton $dim>ﬁ</StyleButton>
                <StyleButton $dim aria-label="스와시"><Icon name="swash" size={16} /></StyleButton>
                <StyleButton $dim>st</StyleButton>
                <StyleButton $dim aria-label="제목용 대체"><Icon name="titling" size={17} /></StyleButton>
                <StyleButton $dim aria-label="상황별 대체"><Icon name="contextual" size={17} /></StyleButton>
                <StyleButton $dim aria-label="스타일 대체"><Icon name="stylistic" size={17} /></StyleButton>
                <StyleButton $dim>1<sup>st</sup></StyleButton>
                <StyleButton $dim>½</StyleButton>
            </StyleRow>
            <CharRow>
                <Select label="언어" value="영어 : 미국" $w={121} $h={22} />
                <AntiAlias><sup>a</sup>a</AntiAlias>
                <Select label="앤티 앨리어스" value="선명 ..." $w={67} $h={22} />
            </CharRow>
        </CharBody>
    </Panel>
);

const LayerBar = styled.div`
    display: flex;
    align-items: center;
    height: ${p => p.$h}px;
    padding: ${p => p.$top || 0}px 22px 0 3px;
    border-bottom: ${p => (p.$plain ? 'none' : '1px solid #424242')};
    color: ${p => (p.$dim ? '#989898' : '#dcdcdc')};
`;
const FilterIcons = styled.div`
    display: flex;
    gap: 4px;
    margin-left: 14px;
`;
const FilterToggle = styled.input`
    && {
        width: 10px;
        height: 18px;
        margin-left: 12px;
        appearance: none;
        border-radius: 5px;
        background: radial-gradient(circle at 5px 5px, #e0e0e0 4px, #3c3c3c 5px);
    }
`;
const LockIcons = styled.div`
    display: flex;
    gap: 2px;
    margin: 0 5px;
`;
const BarLabel = styled.span`
    margin: 0 5px 0 auto;
    white-space: nowrap;
`;
const LayerList = styled.div`
    display: flex;
    flex: 1;
    margin-top: 3px;
    background-color: #4d4d4d;
`;
const LayerRows = styled.div`
    flex: 1;
`;
const LayerRow = styled.div`
    display: flex;
    align-items: center;
    height: 28px;
    padding-right: 14px;
    border-bottom: 1px solid #424242;
    background-color: #535353;
    font-size: 13px;
`;
const EyeCell = styled.span`
    margin-right: 4px;
    border-right: 1px solid #464646;
`;
const LayerName = styled.span`
    flex: 1;
    margin-left: 11px;
`;
const LayerTrack = styled.div`
    width: 16px;
    background-color: #4a4a4a;
`;

const CHECKERBOARD = 'repeating-conic-gradient(#cccccc 0 25%, #ffffff 0 50%) 0 0 / 8px 8px';

const Visibility = () => (
    <EyeCell>
        <IconButton $w={29} $h={27} aria-label="레이어 표시"><Icon name="eye" size={14} /></IconButton>
    </EyeCell>
);

const LayersPanel = () => (
    <Panel $grow>
        <PanelTabs tabs={['3D', '레이어', '채널']} active="레이어" />
        <LayerBar $h={33} $top={7}>
            <Select label="필터 종류" value="종류" lead $w={85} $h={24} $pad={23} />
            <FilterIcons>
                {['image', 'adjust', 'type', 'transform', 'smart'].map(n => (
                    <IconButton key={n} aria-label={n}><Icon name={n} size={n === 'adjust' || n === 'type' ? 14 : 12} /></IconButton>
                ))}
            </FilterIcons>
            <FilterToggle type="checkbox" defaultChecked aria-label="필터 켜기" />
        </LayerBar>
        <LayerBar $h={29} $dim>
            <Select label="혼합 모드" value="표준" $dim $w={118} $h={22} />
            <BarLabel>불투명도 :</BarLabel>
            <Field label="불투명도" value="100%" combo $dim $w={54} />
        </LayerBar>
        <LayerBar $h={28} $dim $plain>
            <span>&nbsp;잠그기 :</span>
            <LockIcons>
                {['lockAlpha', 'brush', 'move', 'crop', 'lock'].map(n => (
                    <IconButton key={n} $dim aria-label={n}><Icon name={n} size={n === 'brush' || n === 'move' ? 16 : 12} color="#a0a0a0" /></IconButton>
                ))}
            </LockIcons>
            <BarLabel>칠:</BarLabel>
            <Field label="칠" value="100%" combo $dim $w={54} />
        </LayerBar>
        <LayerList>
            <LayerRows>
                <LayerRow>
                    <Visibility />
                    <Thumb $bg={CHECKERBOARD} />
                    <LayerName>레이어 1</LayerName>
                </LayerRow>
                <LayerRow>
                    <Visibility />
                    <Thumb $bg="#8b8ac5" />
                    <LayerName>배경</LayerName>
                    <Icon name="lockOutline" size={12} />
                </LayerRow>
            </LayerRows>
            <LayerTrack />
        </LayerList>
        <PanelFooter $gap={7} $end={24}>
            <IconButton $dim aria-label="레이어 연결"><Icon name="chain" size={17} /></IconButton>
            <IconButton $dim $more aria-label="레이어 스타일"><Icon name="fx" size={17} /></IconButton>
            <IconButton $dim aria-label="마스크"><Icon name="mask" size={14} /></IconButton>
            <IconButton $more aria-label="조정 레이어"><Icon name="adjust" size={15} /></IconButton>
            <IconButton aria-label="그룹"><Icon name="folder" size={13} /></IconButton>
            <IconButton aria-label="새 레이어"><Icon name="plusBox" size={12} /></IconButton>
            <IconButton $dim aria-label="삭제"><Icon name="trash" size={13} /></IconButton>
        </PanelFooter>
    </Panel>
);

const App = () => (
    <>
        <GlobalStyle />
        <Page>
            <TopBars />
            <Body>
                <Tools />
                <Document />
                <IconDock />
                <Panels>
                    <Strip $align="flex-end"><Icon name="expand" size={10} /></Strip>
                    <HistoryPanel />
                    <CharacterPanel />
                    <LayersPanel />
                </Panels>
            </Body>
        </Page>
    </>
);

export default App;
